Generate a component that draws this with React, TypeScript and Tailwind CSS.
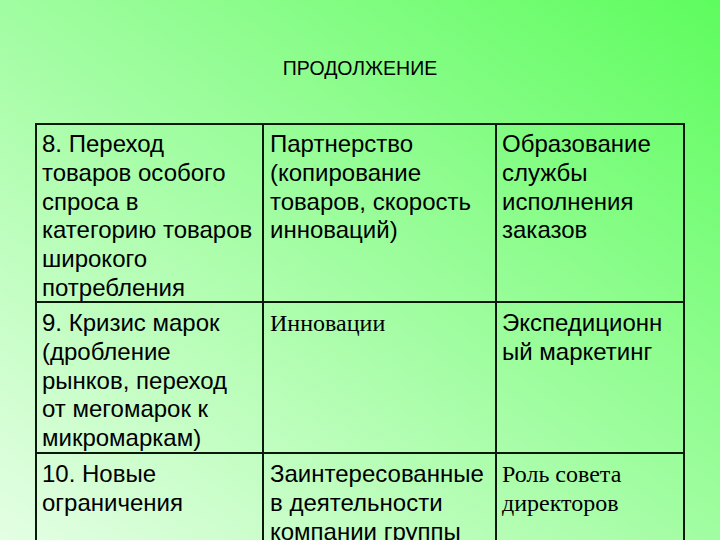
const sans = "font-['Liberation_Sans',Arial,sans-serif]";
const serif = "font-['Liberation_Serif','Times_New_Roman',serif]";

type Cell = {
    lines: string[];
    serif?: boolean;
};

const rows: Cell[][] = [
    [
        {
            lines: [
                "8. Переход",
                "товаров особого",
                "спроса в",
                "категорию товаров",
                "широкого",
                "потребления",
            ],
        },
        { lines: ["Партнерство", "(копирование", "товаров, скорость", "инноваций)"] },
        { lines: ["Образование", "службы", "исполнения", "заказов"] },
    ],
    [
        {
            lines: [
                "9. Кризис марок",
                "(дробление",
                "рынков, переход",
                "от мегомарок к",
                "микромаркам)",
            ],
        },
        { lines: ["Инновации"], serif: true },
        { lines: ["Экспедиционн", "ый маркетинг"] },
    ],
    [
        { lines: ["10. Новые", "ограничения"] },
        { lines: ["Заинтересованные", "в деятельности", "компании группы"] },
        { lines: ["Роль совета", "директоров"], serif: true },
    ],
];

const padLeft = ["pl-[5px]", "pl-[6px]", "pl-[5px]"];

export default function App() {
    return (
        <div className="w-[720px] h-[540px] overflow-hidden bg-[linear-gradient(to_top_right,#e4fee4,#5efc5e)] text-black">
            <div className={`pt-[56px] text-center text-[19.5px] leading-[24px] ${sans}`}>
                ПРОДОЛЖЕНИЕ
            </div>

            <div className="mt-[43px] ml-[35px] w-[650px] h-[440px] border-2 border-b-0 border-[#0a1a0a] grid grid-cols-[227px_233px_186px] grid-rows-[178px_151px_1fr]">
                {rows.map((row, r) =>
                    row.map((cell, c) => (
                        <div
                            key={`${r}-${c}`}
                            className={`${padLeft[c]} ${r === 0 ? "pt-[5px]" : "pt-[6px]"} ${
                                c < 2 ? "border-r-2" : ""
                            } ${r < 2 ? "border-b-2" : ""} border-[#0a1a0a] whitespace-nowrap text-[24px] leading-[28.8px] ${
                                cell.serif ? serif : sans
                            }`}
                        >
                            {cell.lines.map((line) => (
                                <div key={line}>{line}</div>
                            ))}
                        </div>
                    ))
                )}
            </div>
        </div>
    );
}
